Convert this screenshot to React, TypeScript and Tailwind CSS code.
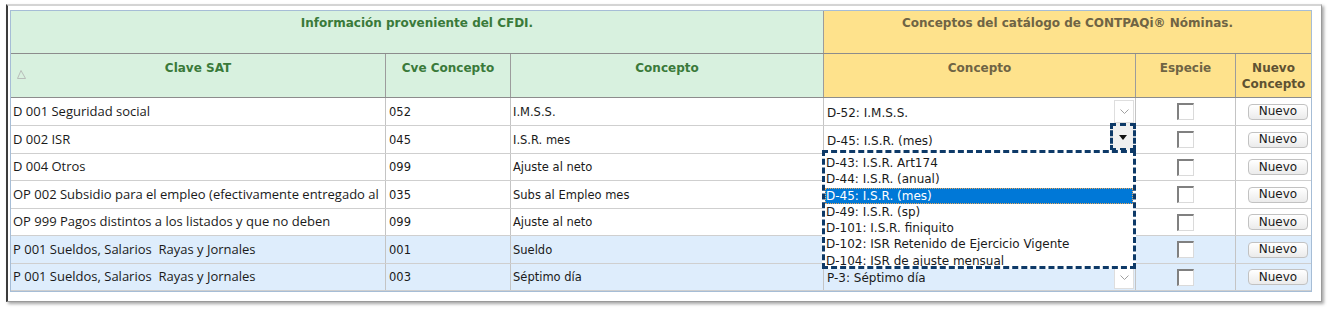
import React from 'react'

type Row = {
  sat: string
  cve: string
  concepto: string
  sel: string
  h: string
  blue?: boolean
  open?: boolean
}

// las filas 3 a 6 quedan tapadas por la lista desplegada
const rows: Row[] = [
  { sat: 'D 001 Seguridad social', cve: '052', concepto: 'I.M.S.S.', sel: 'D-52: I.M.S.S.', h: 'h-[28px]' },
  { sat: 'D 002 ISR', cve: '045', concepto: 'I.S.R. mes', sel: 'D-45: I.S.R. (mes)', h: 'h-[28px]', open: true },
  { sat: 'D 004 Otros', cve: '099', concepto: 'Ajuste al neto', sel: '', h: 'h-[27px]' },
  { sat: 'OP 002 Subsidio para el empleo (efectivamente entregado al', cve: '035', concepto: 'Subs al Empleo mes', sel: '', h: 'h-[28px]' },
  { sat: 'OP 999 Pagos distintos a los listados y que no deben', cve: '099', concepto: 'Ajuste al neto', sel: '', h: 'h-[27px]' },
  { sat: 'P 001 Sueldos, Salarios  Rayas y Jornales', cve: '001', concepto: 'Sueldo', sel: '', h: 'h-[28px]', blue: true },
  { sat: 'P 001 Sueldos, Salarios  Rayas y Jornales', cve: '003', concepto: 'Séptimo día', sel: 'P-3: Séptimo día', h: 'h-[27px]', blue: true },
]

const opciones = [
  'D-43: I.S.R. Art174',
  'D-44: I.S.R. (anual)',
  'D-45: I.S.R. (mes)',
  'D-49: I.S.R. (sp)',
  'D-101: I.S.R. finiquito',
  'D-102: ISR Retenido de Ejercicio Vigente',
  'D-104: ISR de ajuste mensual',
]

const cols = 'grid grid-cols-[375px_125px_313px_312px_100px_75px]'

function Chevron() {
  return (
    <svg width="9" height="5" viewBox="0 0 9 5">
      <polyline points="0.5,0.5 4.5,4.5 8.5,0.5" fill="none" stroke="#a0a0a0" strokeWidth="1" />
    </svg>
  )
}

function SelectCell({ value, open }: { value: string; open?: boolean }) {
  return (
    <div className="flex h-full items-center justify-between border-r border-[#c4c4c4] pl-[3px] pr-[1px]">
      <span className="pt-[2px] font-['DejaVu_Sans',sans-serif] text-[12px] text-[#1a1a1a]">{value}</span>
      {open ? (
        <div className="-mr-[2px] -mt-[5px] flex h-[28px] w-[26px] items-center justify-center border-[3px] border-dashed border-[#0e3a68] bg-[#f0f0f0]">
          <svg width="8" height="5" viewBox="0 0 8 5">
            <polygon points="0,0 8,0 4,5" fill="#111" />
          </svg>
        </div>
      ) : (
        <div className="flex h-[23px] w-[20px] items-center justify-center border border-[#dedede] bg-white">
          <Chevron />
        </div>
      )}
    </div>
  )
}

export default function App() {
  return (
    <div className="h-[312px] w-[1332px] bg-white pl-[6px] pt-[4px]">
      <div className="h-[298px] w-[1316px] border-b border-l-2 border-r border-t-2 border-b-[#9a9a9a] border-l-[#3c3c3c] border-r-[#9a9a9a] border-t-[#d4d4d4] bg-white pl-[2px] pt-[4px] shadow-[2px_2px_3px_rgba(0,0,0,0.35)]">
        <div className="relative w-[1302px] border border-[#a6bdd6]">
          {/* fila de grupos */}
          <div className="grid h-[43px] grid-cols-[813px_487px] border-b border-[#8c8c8c] font-['DejaVu_Sans',sans-serif] text-[12px] font-bold leading-[16px]">
            <div className="border-r border-[#9c9c9c] bg-[#d8f1df] pt-[4px] text-center text-[#3a7a3a]">
              Información proveniente del CFDI.
            </div>
            <div className="bg-[#fee28c] pt-[4px] text-center text-[#6f6444]">
              Conceptos del catálogo de CONTPAQi® Nóminas.
            </div>
          </div>

          {/* encabezados */}
          <div className={`${cols} h-[44px] border-b border-[#8c8c8c] font-['DejaVu_Sans',sans-serif] text-[12px] font-bold leading-[16px]`}>
            <div className="relative border-r border-[#9c9c9c] bg-[#d8f1df] pt-[6px] text-center text-[#3a7a3a]">
              Clave SAT
              <svg className="absolute left-[6px] top-[16px]" width="9" height="9" viewBox="0 0 9 9">
                <polygon points="4,0.5 8.5,8.5 0.5,8.5" fill="none" stroke="#b0b0b0" strokeWidth="0.8" />
              </svg>
            </div>
            <div className="border-r border-[#9c9c9c] bg-[#d8f1df] pt-[6px] text-center text-[#3a7a3a]">Cve Concepto</div>
            <div className="border-r border-[#9c9c9c] bg-[#d8f1df] pt-[6px] text-center text-[#3a7a3a]">Concepto</div>
            <div className="border-r border-[#9c9c9c] bg-[#fee28c] pt-[6px] text-center text-[#6f6444]">Concepto</div>
            <div className="border-r border-[#9c9c9c] bg-[#fee28c] pt-[6px] text-center text-[#6f6444]">Especie</div>
            <div className="bg-[#fee28c] pt-[6px] text-center text-[#5f5232]">
              Nuevo
              <br />
              Concepto
            </div>
          </div>

          {/* datos */}
          {rows.map((r, i) => (
            <div key={i} className={`${cols} ${r.h} border-b border-[#cfcfcf] ${r.blue ? 'bg-[#deedfc]' : 'bg-white'}`}>
              <div className="flex items-center whitespace-pre border-r border-[#c4c4c4] pl-[2px] font-['Open_Sans',sans-serif] text-[13px] text-[#1a1a1a]">
                {r.sat}
              </div>
              <div className="flex items-center border-r border-[#c4c4c4] pl-[3px] pt-[2px] font-['DejaVu_Sans',sans-serif] text-[11.5px] text-[#1a1a1a]">
                {r.cve}
              </div>
              <div className="flex items-center border-r border-[#c4c4c4] pl-[2px] pt-[2px] font-['DejaVu_Sans',sans-serif] text-[11.5px] text-[#1a1a1a]">
                {r.concepto}
              </div>
              <SelectCell value={r.sel} open={r.open} />
              <div className="flex items-center justify-center border-r border-[#c4c4c4]">
                <div className="h-[17px] w-[17px] border-b border-l-2 border-r border-t-2 border-b-[#dadada] border-l-[#808080] border-r-[#dadada] border-t-[#808080] bg-white" />
              </div>
              <div className="flex items-center justify-end pr-[3px]">
                <button className="h-[16px] w-[60px] rounded-[4px] border border-[#c2c2c2] bg-linear-to-b from-white to-[#ebebeb] font-['DejaVu_Sans',sans-serif] text-[12px] leading-[13px] text-[#1a1a1a]">
                  Nuevo
                </button>
              </div>
            </div>
          ))}

          {/* lista desplegada */}
          <div className="absolute left-[811px] top-[139px] h-[119px] w-[314px] overflow-hidden border-[3px] border-dashed border-[#0e3a68] bg-white pt-[2px]">
            {opciones.map((o) => (
              <div
                key={o}
                className={`h-[16.3px] whitespace-nowrap border font-['DejaVu_Sans',sans-serif] text-[12px] leading-[14px] ${
                  o === 'D-45: I.S.R. (mes)'
                    ? 'border-dotted border-[#e9a65a] bg-[#0078d7] text-white'
                    : 'border-transparent text-[#1a1a1a]'
                }`}
              >
                {o}
              </div>
            ))}
          </div>
        </div>
      </div>
    </div>
  )
}
